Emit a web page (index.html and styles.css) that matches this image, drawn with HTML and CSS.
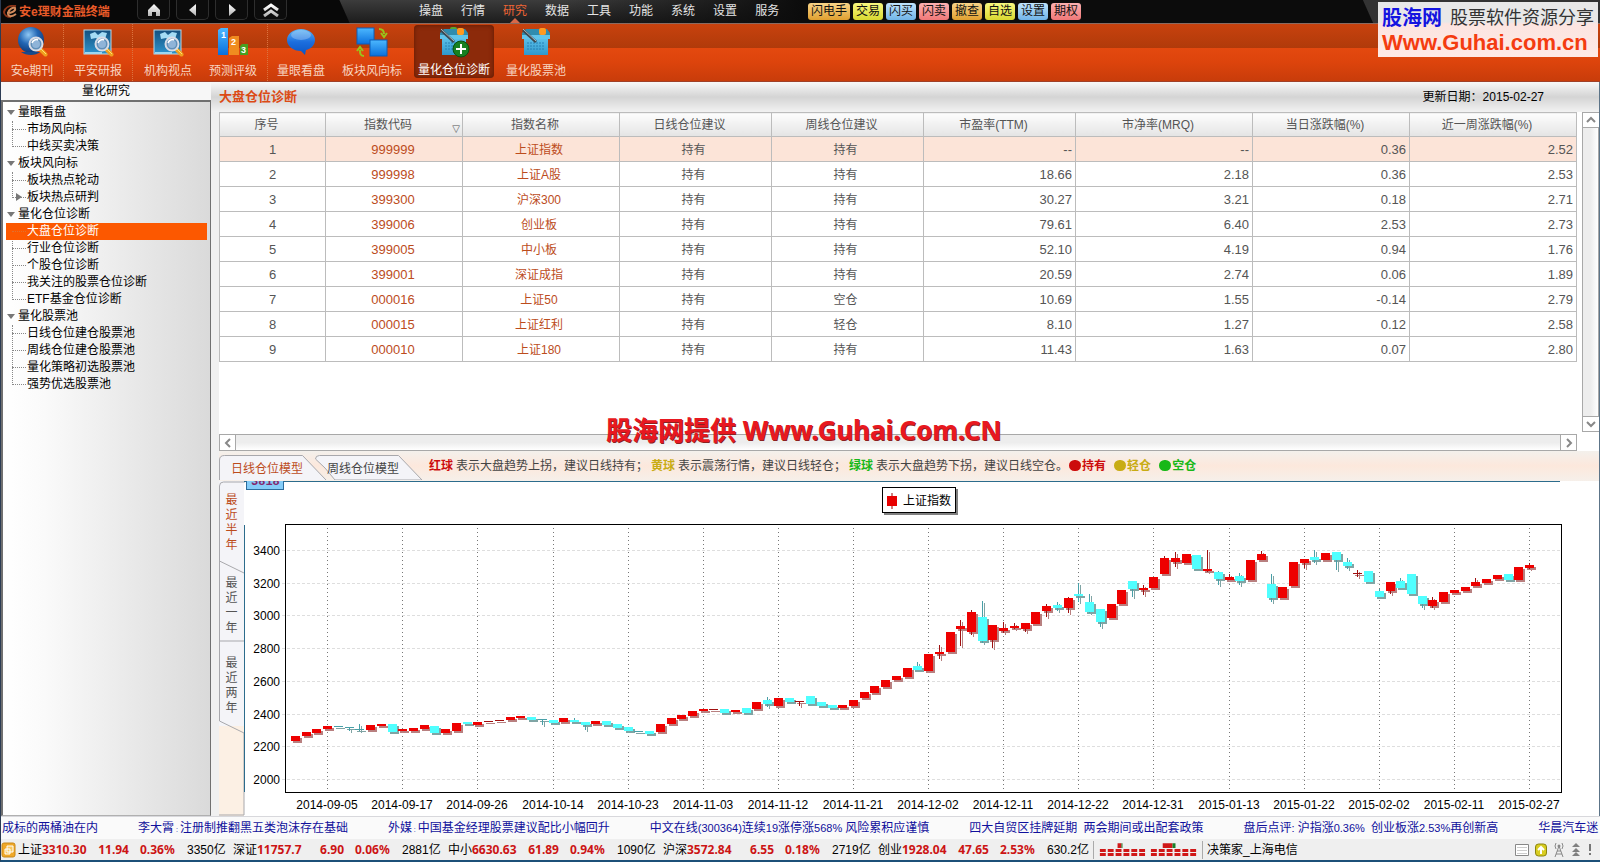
FILE: index.html
```html
<!DOCTYPE html>
<html lang="zh-CN">
<head>
<meta charset="utf-8">
<title>安e理财金融终端</title>
<link rel="stylesheet" href="styles.css">
</head>
<body>
<svg class="defs" aria-hidden="true">
  <defs>
    <radialGradient id="globe" cx=".4" cy=".3" r=".8"><stop offset="0" stop-color="#8fc8f4"/><stop offset=".45" stop-color="#2266b4"/><stop offset="1" stop-color="#0a2c66"/></radialGradient>
    <linearGradient id="blue" x2="0" y2="1"><stop offset="0" stop-color="#4cb8ff"/><stop offset="1" stop-color="#0a6fdc"/></linearGradient>
    <linearGradient id="bubble" x2="0" y2="1"><stop offset="0" stop-color="#5cb4f4"/><stop offset=".5" stop-color="#1c6ede"/><stop offset="1" stop-color="#0b55c4"/></linearGradient>
    <linearGradient id="picture" x2="0" y2="1"><stop offset="0" stop-color="#14507e"/><stop offset="1" stop-color="#2d94cc"/></linearGradient>
    <linearGradient id="basket" x2="0" y2="1"><stop offset="0" stop-color="#5cc0ea"/><stop offset="1" stop-color="#2f98cc"/></linearGradient>
    <linearGradient id="silver" x2="0" y2="1"><stop offset="0" stop-color="#fff"/><stop offset="1" stop-color="#b4b4b4"/></linearGradient>
    <symbol id="lens" viewBox="0 0 20 22"><path d="M13 15l4.500 4.500" stroke="#f0a020" stroke-width="4" stroke-linecap="round"/><path d="M13 14l5 5" stroke="#ffe070" stroke-width="1"/><circle cx="8" cy="9" r="6.500" fill="#5f8fb8" stroke="#d8dce6" stroke-width="2"/><circle cx="8" cy="9" r="4" fill="#8fb4d8"/><path d="M4 8c1-3 4-4 6-3" stroke="#fff" stroke-width="1.500" fill="none"/></symbol>
    <symbol id="photo" viewBox="0 0 32 32"><rect x="2" y="4" width="27" height="24" fill="url(#picture)" stroke="#b8dcec"/><path d="M8 8l5-2 3 3 4-3 5 1-2 6-5 2-4-3-5 1z" fill="#a4dcf4"/><path d="M3 27h17" stroke="#9cd8f0" stroke-width="2"/></symbol>
    <symbol id="cart" viewBox="0 0 32 32"><path d="M4 12h24v17H4z" fill="url(#basket)"/><path d="M2 7l4-4h21l3 4v6H2z" fill="#2f8cae"/><path d="M2 9h28v4H2z" fill="#60c4ea"/><path d="M7 17h18M7 20h18M7 23h18" stroke="#2680b4" stroke-dasharray="2 1"/><rect x="19" y="2" width="7" height="7" rx="2" fill="#ff9a20"/><path d="M3 4l13 12" stroke="#3c4850" stroke-width="3"/><path d="M3 3l13 12" stroke="#a8bcc4" stroke-width="1"/></symbol>
  </defs>
</svg>
<div class="app">
  <header class="titlebar">
    <div class="brand">
      <svg width="16" height="14" viewBox="0 0 16 14"><path d="M13 1C6 0 2 3 1 7c0 3 3 5 7 5" fill="none" stroke="#8c3418" stroke-width="2"/><path d="M4 8c5 0 9-2 8-5-2-1-6 1-7 5 0 4 4 4 8 1" fill="none" stroke="#d08a5c" stroke-width="2"/></svg>
      <span>安e理财金融终端</span>
    </div>
    <div class="nav">
      <button class="nav-btn" aria-label="主页"><svg width="14" height="14" viewBox="0 0 14 14"><path d="M7 1L1 7v6h4V9h4v4h4V7z" fill="url(#silver)"/></svg></button>
      <button class="nav-btn" aria-label="后退"><svg width="14" height="14" viewBox="0 0 14 14"><path d="M10 1v12L3 7z" fill="url(#silver)"/></svg></button>
      <button class="nav-btn" aria-label="前进"><svg width="14" height="14" viewBox="0 0 14 14"><path d="M4 1v12l7-6z" fill="url(#silver)"/></svg></button>
      <button class="nav-btn" aria-label="收起"><svg width="16" height="14" viewBox="0 0 16 14"><path d="M1 7l7-5 7 5M1 13l7-5 7 5" fill="none" stroke="url(#silver)" stroke-width="3"/></svg></button>
    </div>
    <nav class="menu">
      <a href="#">操盘</a><a href="#">行情</a><a href="#" class="current">研究</a><a href="#">数据</a><a href="#">工具</a><a href="#">功能</a><a href="#">系统</a><a href="#">设置</a><a href="#">服务</a>
    </nav>
    <div class="tags">
      <button class="tag gold">闪电手</button><button class="tag lime">交易</button><button class="tag sky">闪买</button><button class="tag rose">闪卖</button><button class="tag gold">撤查</button><button class="tag lime">自选</button><button class="tag sky">设置</button><button class="tag rose">期权</button>
    </div>
  </header>

  <div class="toolbar">
    <button class="tool w63 sep"><svg width="32" height="32" viewBox="0 0 32 32"><circle cx="15" cy="14" r="13" fill="url(#globe)"/><path d="M5 26c5 4 15 4 19 0z" fill="#174a8c"/><use href="#lens" x="12" y="9" width="20" height="22"/></svg><span>安e期刊</span></button>
    <button class="tool w69 sep"><svg width="32" height="32"><use href="#photo" width="32" height="32"/><use href="#lens" x="12" y="9" width="20" height="22"/></svg><span>平安研报</span></button>
    <button class="tool w66 inset"><svg width="32" height="32"><use href="#photo" width="32" height="32"/><use href="#lens" x="12" y="9" width="20" height="22"/></svg><span>机构视点</span></button>
    <button class="tool w69 sep"><svg width="32" height="32" viewBox="0 0 32 32"><path d="M1 4l3-2h7v27H1z" fill="url(#blue)"/><path d="M12 12l3-2h7v19H12z" fill="#f08c20"/><path d="M23 20l2-2h6v11h-8z" fill="#48a020"/><g class="rank"><text x="4" y="12">1</text><text x="14" y="19">2</text><text x="24" y="27">3</text></g></svg><span>预测评级</span></button>
    <button class="tool w66"><svg width="32" height="32" viewBox="0 0 32 32"><path d="M16 3c8 0 14 5 14 11 0 5-4 9-9 10l-1 5-4-4C8 25 2 20 2 14S8 3 16 3z" fill="url(#bubble)"/><ellipse cx="16" cy="9" rx="10" ry="5" fill="#fff" opacity=".25"/></svg><span>量眼看盘</span></button>
    <button class="tool w76"><svg width="32" height="32" viewBox="0 0 32 32"><rect x="1" y="2" width="17" height="16" fill="url(#blue)" stroke="#0c5cb8"/><rect x="14" y="14" width="17" height="16" fill="url(#blue)" stroke="#0c5cb8"/><path d="M23 3c4 0 5 2 5 5m-3-1l3 4 3-4M8 30c-4 0-4-3-4-6m-3 1l3-4 3 4" fill="none" stroke="#98c41c" stroke-width="2"/></svg><span>板块风向标</span></button>
    <button class="tool w80 active"><svg width="32" height="32" viewBox="0 0 32 32"><rect x="12" y="1" width="7" height="7" rx="2" fill="#58a830"/><use href="#cart" width="32" height="32"/><circle cx="23" cy="23" r="8" fill="#168020" stroke="#0a5010"/><path d="M23 18v10M18 23h10" stroke="#fff" stroke-width="2"/></svg><span>量化仓位诊断</span></button>
    <button class="tool w76"><svg width="32" height="32"><use href="#cart" width="32" height="32"/></svg><span>量化股票池</span></button>
  </div>

  <div class="workspace">
    <aside class="sidebar">
      <h2>量化研究</h2>
      <div class="tree">
        <div class="group"><a href="#" class="parent">量眼看盘</a>
          <ul><li><a href="#">市场风向标</a></li><li><a href="#">中线买卖决策</a></li></ul></div>
        <div class="group"><a href="#" class="parent">板块风向标</a>
          <ul><li><a href="#">板块热点轮动</a></li><li class="closed"><a href="#">板块热点研判</a></li></ul></div>
        <div class="group"><a href="#" class="parent">量化仓位诊断</a>
          <ul><li class="selected"><a href="#">大盘仓位诊断</a></li><li><a href="#">行业仓位诊断</a></li><li><a href="#">个股仓位诊断</a></li><li><a href="#">我关注的股票仓位诊断</a></li><li><a href="#">ETF基金仓位诊断</a></li></ul></div>
        <div class="group"><a href="#" class="parent">量化股票池</a>
          <ul><li><a href="#">日线仓位建仓股票池</a></li><li><a href="#">周线仓位建仓股票池</a></li><li><a href="#">量化策略初选股票池</a></li><li><a href="#">强势优选股票池</a></li></ul></div>
      </div>
    </aside>

    <main class="main">
      <div class="heading">
        <h1>大盘仓位诊断</h1>
        <p>更新日期：2015-02-27</p>
      </div>
      <div class="listing">
        <div class="table-wrap">
          <table>
            <colgroup><col class="c1"><col class="c2"><col class="c3"><col class="c4"><col class="c4"><col class="c4"><col class="c7"><col class="c8"><col class="c9"></colgroup>
            <thead><tr><th>序号</th><th class="sorted">指数代码<span class="sort">▽</span></th><th>指数名称</th><th>日线仓位建议</th><th>周线仓位建议</th><th>市盈率(TTM)</th><th>市净率(MRQ)</th><th>当日涨跌幅(%)</th><th>近一周涨跌幅(%)</th></tr></thead>
            <tbody>
              <tr class="hot"><td>1</td><td>999999</td><td>上证指数</td><td>持有</td><td>持有</td><td>--</td><td>--</td><td>0.36</td><td>2.52</td></tr>
              <tr><td>2</td><td>999998</td><td>上证A股</td><td>持有</td><td>持有</td><td>18.66</td><td>2.18</td><td>0.36</td><td>2.53</td></tr>
              <tr><td>3</td><td>399300</td><td>沪深300</td><td>持有</td><td>持有</td><td>30.27</td><td>3.21</td><td>0.18</td><td>2.71</td></tr>
              <tr><td>4</td><td>399006</td><td>创业板</td><td>持有</td><td>持有</td><td>79.61</td><td>6.40</td><td>2.53</td><td>2.73</td></tr>
              <tr><td>5</td><td>399005</td><td>中小板</td><td>持有</td><td>持有</td><td>52.10</td><td>4.19</td><td>0.94</td><td>1.76</td></tr>
              <tr><td>6</td><td>399001</td><td>深证成指</td><td>持有</td><td>持有</td><td>20.59</td><td>2.74</td><td>0.06</td><td>1.89</td></tr>
              <tr><td>7</td><td>000016</td><td>上证50</td><td>持有</td><td>空仓</td><td>10.69</td><td>1.55</td><td>-0.14</td><td>2.79</td></tr>
              <tr><td>8</td><td>000015</td><td>上证红利</td><td>持有</td><td>轻仓</td><td>8.10</td><td>1.27</td><td>0.12</td><td>2.58</td></tr>
              <tr><td>9</td><td>000010</td><td>上证180</td><td>持有</td><td>持有</td><td>11.43</td><td>1.63</td><td>0.07</td><td>2.80</td></tr>
            </tbody>
          </table>
        </div>
        <div class="vbar">
          <button aria-label="向上"><svg width="10" height="10" viewBox="0 0 10 10"><path d="M1 7l4-4 4 4"/></svg></button>
          <button aria-label="向下"><svg width="10" height="10" viewBox="0 0 10 10"><path d="M1 3l4 4 4-4"/></svg></button>
        </div>
        <div class="hbar">
          <button aria-label="向左"><svg width="10" height="10" viewBox="0 0 10 10"><path d="M7 1L3 5l4 4"/></svg></button>
          <button aria-label="向右"><svg width="10" height="10" viewBox="0 0 10 10"><path d="M3 1l4 4-4 4"/></svg></button>
        </div>
        <div class="watermark">股海网提供 Www.Guhai.Com.CN</div>
      </div>

      <div class="tabstrip">
        <button class="tab on"><svg width="108" height="25" viewBox="0 0 108 25"><path d="M.5 25V5q0-4.500 5-4.500h78L107 25"/></svg><span>日线仓位模型</span></button>
        <button class="tab"><svg width="108" height="25" viewBox="0 0 108 25"><path d="M10 13L.5 4q0-3.500 4-3.500h79L107 25H20z"/></svg><span>周线仓位模型</span></button>
        <p class="notes"><b class="red">红球</b><span>表示大盘趋势上拐，建议日线持有；</span><b class="yellow">黄球</b><span>表示震荡行情，建议日线轻仓；</span><b class="green">绿球</b><span>表示大盘趋势下拐，建议日线空仓。</span></p>
        <p class="balls"><b class="red"><i></i>持有</b><b class="yellow"><i></i>轻仓</b><b class="green"><i></i>空仓</b></p>
      </div>
      <div class="chart-area">
        <div class="vtabs">
          <button class="vtab on">最近半年</button>
          <button class="vtab">最近一年</button>
          <button class="vtab">最近两年</button>
          <svg class="vtab-lines" width="26" height="335" viewBox="0 0 26 335"><path d="M.5 240V5q0-4 4-4H26M.5 80L25 92M.5 160H25M.5 240L25 252v82H0" fill="none" stroke="#a8a8ac"/></svg>
        </div>
        <div class="chart">
          <svg id="kline" role="img" aria-label="上证指数"></svg>
          <div class="value-tag"><span>3818</span></div>
          <div class="legend"><svg width="10" height="16" viewBox="0 0 10 16"><path d="M5 0v16" stroke="#900"/><path d="M0 3h10v10H0z" fill="#e80000"/></svg>上证指数</div>
        </div>
      </div>
    </main>
  </div>

  <div class="ticker">
    <a href="#">成标的两桶油在内</a><a href="#">李大霄<span> : </span>注册制推翻黑五类泡沫存在基础</a><a href="#">外媒<span> : </span>中国基金经理股票建议配比小幅回升</a><a href="#">中文在线<span>(300364)</span>连续<span>19</span>涨停涨<span>568% </span>风险累积应谨慎</a><a href="#">四大自贸区挂牌延期<span>  </span>两会期间或出配套政策</a><a href="#">盘后点评<span>: </span>沪指涨<span>0.36%  </span>创业板涨<span>2.53%</span>再创新高</a><a href="#">华晨汽车迷</a>
  </div>

  <footer class="status">
    <svg width="16" height="16" viewBox="0 0 16 16"><rect x="1" y="1" width="13" height="14" rx="2" fill="#f0a828" stroke="#c88818"/><path d="M6 4h6v6H6zM4 7h5v5H4z" fill="#f8c860" stroke="#fff"/></svg>
    <div class="quote"><span>上证</span><b>3310.30</b><b>11.94</b><b>0.36%</b><span>3350亿</span></div>
    <div class="quote"><span>深证</span><b>11757.7</b><b>6.90</b><b>0.06%</b><span>2881亿</span></div>
    <div class="quote"><span>中小</span><b>6630.63</b><b>61.89</b><b>0.94%</b><span>1090亿</span></div>
    <div class="quote"><span>沪深</span><b>3572.84</b><b>6.55</b><b>0.18%</b><span>2719亿</span></div>
    <div class="quote"><span>创业</span><b>1928.04</b><b>47.65</b><b>2.53%</b><span>630.2亿</span></div>
    <svg class="meters" width="110" height="18" viewBox="0 0 110 18"><path d="M6 9.500h46M58 9.500h46M6 13.500h46M58 13.500h46" stroke="#d01818" stroke-width="3" stroke-dasharray="6 2"/><path d="M24 2h4v5h-4zM70 2h10v5H70z" fill="#d01818"/><path d="M28 2h1v5h-1zM80 2h3v5h-3z" fill="#188028"/></svg>
    <span class="source">决策家_上海电信</span>
    <div class="tray">
      <svg width="14" height="14" viewBox="0 0 14 14"><path d="M.5 1.500h13v11H.5z" fill="#fff" stroke="#888"/><path d="M2 4.500h10M2 7.500h10M2 10.500h10" stroke="#ccc"/></svg>
      <svg width="12" height="14" viewBox="0 0 12 14"><rect x=".5" y="1" width="11" height="12" rx="3" fill="#d8cc20" stroke="#8a8410"/><path d="M6 11V5M3 7l3-3 3 3" fill="none" stroke="#fff" stroke-width="2"/></svg>
      <svg width="12" height="16" viewBox="0 0 12 16"><path d="M6 4L2 15M6 4l4 11M3 12h6M4 9h4M3 1q-2 3 0 6M9 1q2 3 0 6" fill="none" stroke="#888"/><circle cx="6" cy="4" r="1.500" fill="#888"/></svg>
      <svg width="10" height="14" viewBox="0 0 10 14"><path d="M5 0l4 4H1zM5 5l4 4H1zM5 9l4 4H1z" fill="#808080"/></svg>
      <svg width="6" height="14" viewBox="0 0 6 14"><path d="M3 1v7M3 10v2" stroke="#777" stroke-width="2"/></svg>
    </div>
  </footer>
  <aside class="sponsor">
    <div><strong>股海网</strong><span>股票软件资源分享</span></div>
    <em>Www.Guhai.com.cn</em>
  </aside>
</div>
<script src="chart.js"></script>
</body>
</html>
```
FILE: styles.css
```css
* { box-sizing: border-box; }
body {
  margin: 0;
  font: 12px/16px "Liberation Sans", "Noto Sans CJK SC", sans-serif;
  color: #000;
}
h1, h2, p, ul { margin: 0; padding: 0; }
ul { list-style: none; }
a { color: inherit; text-decoration: none; }
button { margin: 0; padding: 0; border: 0; background: none; font: inherit; color: inherit; }
svg { display: block; flex: none; }
.defs { position: absolute; width: 0; height: 0; }
.app {
  position: relative;
  display: flex;
  flex-direction: column;
  min-height: 100vh;
  border-left: 1px solid #2c3c54;
  border-bottom: 2px solid #1c5078;
  overflow: hidden;
}

/* title bar */
.titlebar {
  display: flex;
  height: 24px;
  border-bottom: 1px solid #8a6a60;
  background:
    linear-gradient(66deg, transparent 1253px, #333 1254px),
    linear-gradient(66deg, #080808 318px, transparent 319px),
    linear-gradient(to right, transparent 560px, #0c0c0c 800px),
    linear-gradient(#3c3c3c, #1c1c1c);
}
.brand { display: flex; align-items: center; width: 136px; padding-left: 2px; color: #e85a28; font-weight: bold; }
.nav { display: flex; gap: 6px; width: 282px; }
.nav-btn {
  display: flex;
  justify-content: center;
  align-items: center;
  width: 33px;
  height: 20px;
  border: 1px solid #2e2e2e;
  border-top: 0;
  border-radius: 0 0 5px 5px;
  background: #0c0c0c;
}
.menu { display: flex; gap: 18px; width: 389px; color: #e4e4e4; line-height: 23px; }
.menu .current { position: relative; color: #ee6434; }
.menu .current::after {
  content: "";
  position: absolute;
  left: 7px;
  bottom: 0;
  border: 5px solid transparent;
  border-top: 0;
  border-bottom-color: #d86848;
}
.tags { display: flex; gap: 3px; padding-top: 3px; }
.tag { height: 17px; padding: 0 3px; border-radius: 3px; line-height: 17px; color: #111; }
.gold { background: linear-gradient(#f8d488, #e0a030); }
.lime { background: linear-gradient(#f8f880, #d8d830); }
.sky { background: linear-gradient(#c0e4fc, #70b4e8); }
.rose { background: linear-gradient(#fcb0b0, #f07878); }

/* toolbar */
.toolbar {
  display: flex;
  height: 58px;
  border-bottom: 1px solid #a04028;
  background: linear-gradient(#c8420e, #b03a0a 24px, #e4490f 24px, #dd440c 38px, #c83c0a);
  color: #f8d4c0;
}
.tool { display: flex; flex-direction: column; align-items: center; justify-content: space-between; padding: 2px 0 2px; }
.tool span { white-space: nowrap; }
.tool.sep { border-right: 1px dotted #dc7440; }
.tool.inset { padding-left: 4px; }
.tool.active { margin: 1px 4px 3px; padding: 1px 0 0; border-radius: 4px; background: #8c2a0a; box-shadow: inset 0 0 5px #5c1a04; color: #fff; }
.rank { fill: #fff; font: bold 9px "Liberation Sans", sans-serif; }
.w63 { width: 63px; }
.w66 { width: 66px; }
.w69 { width: 69px; }
.w76 { width: 76px; }
.w80 { width: 80px; }

/* workspace */
.workspace { display: flex; flex: 1; border-right: 1px solid #5c7488; background: #f0f0f0; }
.sidebar { display: flex; flex-direction: column; width: 210px; }
.sidebar h2 { height: 18px; background: #f7f7f7; font-weight: normal; font-size: 12px; line-height: 18px; text-align: center; }
.tree {
  flex: 1;
  padding: 2px 3px;
  border: 2px solid #707070;
  border-right-width: 1px;
  border-bottom: 1px solid #b0b0b0;
  background: linear-gradient(to right, #fff, #fafafa 20%, #dadada);
  line-height: 17px;
}
.parent { display: block; position: relative; padding-left: 12px; }
.parent::before { content: ""; position: absolute; left: 1px; top: 6px; border: 4px solid transparent; border-top: 5px solid #777; border-bottom: 0; }
.tree ul { position: relative; padding-left: 6px; }
.tree ul::before { content: ""; position: absolute; left: 6px; top: 0; bottom: 8px; border-left: 1px dotted #888; }
.tree li { position: relative; height: 17px; padding-left: 15px; }
.tree li::before { content: ""; position: absolute; left: 0; top: 8px; width: 14px; border-top: 1px dotted #888; }
.tree .closed::after { content: ""; position: absolute; left: 4px; top: 4px; border: 4px solid transparent; border-left: 6px solid #777; border-right: 0; }
.tree .selected { margin-left: -6px; padding-left: 21px; background: #fc5800; color: #fff; }
.tree .selected::before { left: 6px; border-color: #e07030; }

.main { display: flex; flex-direction: column; flex: 1; min-width: 0; padding-left: 8px; }
.heading {
  display: flex;
  justify-content: space-between;
  align-items: center;
  height: 30px;
  margin-left: -8px;
  padding: 0 55px 0 8px;
  background: linear-gradient(#f8f8f8, #d4d4d4 50%, #f2f2f2);
}
.heading h1 { font-size: 13px; color: #dc4a14; }

.listing { position: relative; display: grid; grid-template: 1fr 17px / 1fr 17px; column-gap: 5px; flex: 1; background: #fff; }
table { width: 100%; border-collapse: collapse; table-layout: fixed; color: #555; }
.c1 { width: 106px; }
.c2 { width: 137px; }
.c3 { width: 157px; }
.c4 { width: 152px; }
.c7 { width: 177px; }
.c8 { width: 157px; }
th, td { padding: 0 3px; border: 1px solid #bcbcbc; }
th { position: relative; height: 24px; background: linear-gradient(#fdfdfd, #e4e4e4); font-weight: normal; padding-right: 15px; }
.sort { position: absolute; right: 2px; bottom: 0; font: 10px/14px "DejaVu Sans", sans-serif; }
td { height: 25px; padding-top: 2px; text-align: right; font-size: 13px; }
td:nth-child(-n+5) { text-align: center; }
td:nth-child(2) { padding-right: 5px; }
td:nth-child(n+3):nth-child(-n+5) { font-size: 12px; padding-right: 7px; }
td:nth-child(2), td:nth-child(3) { color: #bc4c1c; }
.hot td { background: #fce4d8; }
.vbar, .hbar { display: flex; justify-content: space-between; border: 1px solid #a8a8a8; }
.vbar { flex-direction: column; margin-bottom: 2px; background: linear-gradient(to right, #ededed 50%, #fff); }
.hbar { background: linear-gradient(#ededed 50%, #fff); }
.vbar button, .hbar button { display: grid; place-items: center; width: 16px; height: 15px; background: #fff; }
.vbar button:first-child { border-bottom: 1px solid #a8a8a8; }
.vbar button:last-child { border-top: 1px solid #a8a8a8; }
.hbar button:first-child { border-right: 1px solid #a8a8a8; }
.hbar button:last-child { border-left: 1px solid #a8a8a8; }
.vbar path, .hbar path { fill: none; stroke: #888; stroke-width: 2; }
.watermark {
  position: absolute;
  left: 387px;
  bottom: 4px;
  font: bold 26px/34px "Noto Sans", "Noto Sans CJK SC", sans-serif;
  color: #e81820;
  text-shadow: 1px 1px 0 #8c2020;
  white-space: nowrap;
}

/* model tabs */
.tabstrip { display: flex; align-items: flex-end; height: 30px; padding-bottom: 1px; background: linear-gradient(#f4f0ec, #fce8dc 50%, #f6f0ea); color: #444; }
.tab { position: relative; width: 108px; height: 25px; text-align: left; }
.tab + .tab { margin-left: -12px; }
.tab svg { position: absolute; left: 0; top: 0; }
.tab path { fill: #f4f4f8; stroke: #a8a8ac; }
.tab span { position: relative; padding-left: 12px; line-height: 28px; }
.tab.on { z-index: 1; color: #bc4c1c; }
.notes { display: flex; gap: 3px; margin-left: 6px; line-height: 28px; white-space: nowrap; }
.balls { display: flex; gap: 8px; margin-left: 1px; line-height: 28px; white-space: nowrap; }
.balls i { display: inline-block; width: 12px; height: 11px; margin-right: 1px; border-radius: 6px; background: currentColor; vertical-align: -1px; }
.red { color: #cc0c0c; }
.yellow { color: #c8ac14; }
.green { color: #18b818; }

/* chart */
.chart-area { display: flex; height: 335px; background: #fff; }
.vtabs { position: relative; display: flex; flex-direction: column; width: 25px; padding-bottom: 89px; background: linear-gradient(#f4f4f8 245px, #fcf0e4 245px); }
.vtab { display: flex; flex: 1; padding: 4px 6px 0; line-height: 15px; color: #555; }
.vtab.on { color: #bc4c1c; padding-top: 12px; }
.vtab-lines { position: absolute; left: 0; top: 0; pointer-events: none; }
.vtab:nth-child(2) { padding-top: 12px; }
.vtab:nth-child(3) { padding-top: 10px; }
.chart { position: relative; flex: 1; min-width: 0; }
#kline { width: 100%; height: 335px; }
#kline text { font-size: 12px; }
.value-tag { position: absolute; left: 2px; top: 0; width: 38px; height: 9px; overflow: hidden; border: 1px solid #2c6c9c; border-top: 0; background: #84ccf8; color: #84286c; font: bold 12px/12px "Liberation Mono", monospace; }
.value-tag span { position: relative; top: -5px; padding-left: 4px; }
.legend { position: absolute; left: 638px; top: 6px; display: flex; align-items: center; gap: 6px; padding: 5px 4px 3px; border: 1px solid #000; background: #fff; box-shadow: 2px 2px 0 #808080; }

/* ticker and status */
.ticker { display: flex; gap: 40px; height: 23px; padding-left: 1px; overflow: hidden; border-top: 1px solid #d8d8dc; background: #fafafa; color: #10109c; line-height: 23px; white-space: nowrap; }
.ticker a { flex: none; white-space: pre; }
.ticker span { font-size: 11px; }
.ticker a:nth-child(2) span, .ticker a:nth-child(3) span { font-size: 7px; }
.status { display: flex; align-items: center; height: 21px; background: #efefef; white-space: nowrap; }
.quote { display: grid; flex: none; grid-template-columns: 24px 55px 32px 46px 46px; width: 215px; padding-left: 1px; }
.quote b { color: #cc1414; font-family: "Noto Sans", sans-serif; }
.quote b:nth-child(3) { text-align: right; }
.quote b:nth-child(4) { padding-left: 11px; }
.quote span:last-child { padding-left: 12px; }
.meters { margin-left: 1px; border: 1px solid #aaa; border-width: 0 1px; }
.source { padding-left: 4px; }
.tray { display: flex; align-items: center; gap: 6px; margin-left: auto; padding-right: 7px; }

/* sponsor panel */
.sponsor { position: absolute; right: 2px; top: 2px; width: 220px; height: 55px; padding: 4px; background: linear-gradient(#e8e8e8 36%, #fce4e0 40%, #fdeae6); white-space: nowrap; }
.sponsor div { display: flex; align-items: center; gap: 8px; height: 24px; }
.sponsor strong { font-size: 20px; color: #1414e0; }
.sponsor span { font-size: 18px; color: #333; }
.sponsor em { display: block; font: bold 22px/26px "Liberation Sans", sans-serif; color: #f43c10; }
```
FILE: chart.js
```js
// One row per trading day: colour, body top, body bottom, optional high and low.
// Vertical positions are in the chart's own units, measured from ORIGIN.
const ORIGIN = 481;
const days = `r736 741,r732 736,r729 733,r726 729,c726 727,c727 728 727 731,c729 730 724 731,r725 730,r724 726,c724 732,
r729 731,r728 731,r725 729,c726 733,r729 733,r723 731,c722 724,r722 725,r721 722,r720 721,
r717 720,r716 718,c717 720,c719 720 719 725,c720 723,r718 722,c720 722 718 722,c722 725 722 730,r721 724,c721 725,
c724 728,c727 731,c731 732,c731 734,r724 732,r718 724,r715 719,r711 716,r709 711,r709 710,
c709 713,r710 712,c708 713,r702 709,c700 704 697 707,r698 706,c698 702,r701 702 701 706,c696 704,c702 706,
c705 708,r705 708,r700 706,r692 698,r686 693,r680 687,r676 680,r668 677,c666 670 662 670,r654 671,
r652 654 645 659,r632 652,r626 629 620 646,r612 632 610 635,c617 641 601 643,r625 640 625 648,r628 631 622 633,r626 628 623 629,r623 629 623 632,r612 624,
r606 611 604 617,c605 608 602 611,r598 608 597 613,c594 596 583 602,c602 612 594 613,c609 622 609 627,r604 618,r590 604,c581 589 581 597,r588 590 585 595,
r577 588,r558 574 556 574,r558 562 552 567,r554 563,c555 569,r569 571 550 572,c572 579 571 585,r577 580 574 580,c576 581 573 585,r560 580,
r554 560 551 560,c584 598 574 602,r587 598,r562 586,r559 563 559 568,c557 560 550 563,r553 560,c552 560 552 570,c562 566 558 569,r573 574 570 577,
c571 582,c591 597 589 597,r582 591 582 594,c581 588 578 588,c574 594,c596 604 596 608,r600 606 597 608,r592 602,r590 593,r587 591,
r582 586 578 586,r579 583,r575 579,c574 580,r567 580,r565 568 563 569`
  .split(",").map(s => {
    s = s.trim();
    const [top, bottom, high = top, low = bottom] = s.slice(1).split(" ").map(n => n - ORIGIN);
    return { up: s[0] === "r", top, bottom, high, low };
  });
const dates = ["2014-09-05", "2014-09-17", "2014-09-26", "2014-10-14", "2014-10-23", "2014-11-03", "2014-11-12", "2014-11-21", "2014-12-02", "2014-12-11", "2014-12-22", "2014-12-31", "2015-01-13", "2015-01-22", "2015-02-02", "2015-02-11", "2015-02-27"];
const svg = document.getElementById("kline");

function draw() {
  const width = svg.clientWidth;
  const left = 41, right = width - 38, top = 43, bottom = 311;
  const step = (right - left - 42) / (days.length - 1);
  const x = i => Math.round(left + 10 + i * step);
  let out = `<path d="M0 0.5H${width - 39}M0.5 44V311" stroke="#2c6c8c"/>`;
  for (let v = 2000; v <= 3400; v += 200) {
    const y = Math.round(298 - (v - 2000) * 0.1637) + 0.5;
    out += `<path d="M${left - 3} ${y}H${right}" stroke="#dedede" stroke-dasharray="3 2"/><text x="36" y="${y + 4}" text-anchor="end">${v}</text>`;
  }
  dates.forEach((date, n) => {
    const at = x(3 + n * 7);
    out += `<path d="M${at + 0.5} ${top + 4}V${bottom}" stroke="#777" stroke-dasharray="1 3"/><text x="${at}" y="328" text-anchor="middle">${date}</text>`;
  });
  out += `<rect x="${left + 0.5}" y="${top + 0.5}" width="${right - left}" height="${bottom - top}" fill="none" stroke="#000"/>`;
  days.forEach((d, i) => {
    const at = x(i), h = d.bottom - d.top;
    const body = d.up ? "#ee0000" : "#50ffff", shade = d.up ? "#b88080" : "#80a4a4", wick = d.up ? "#a01010" : "#48a0a8";
    out += `<path d="M${at + 2.5} ${d.high + 2}V${d.low + 2}" stroke="${shade}"/><rect x="${at - 2}" y="${d.top + 2}" width="9" height="${h}" fill="${shade}"/>`
      + `<path d="M${at + 0.5} ${d.high}V${d.low}" stroke="${wick}"/><rect x="${at - 4}" y="${d.top}" width="9" height="${h}" fill="${h < 2 ? wick : body}"/>`;
  });
  svg.innerHTML = out;
}
draw();
addEventListener("resize", draw);
```
